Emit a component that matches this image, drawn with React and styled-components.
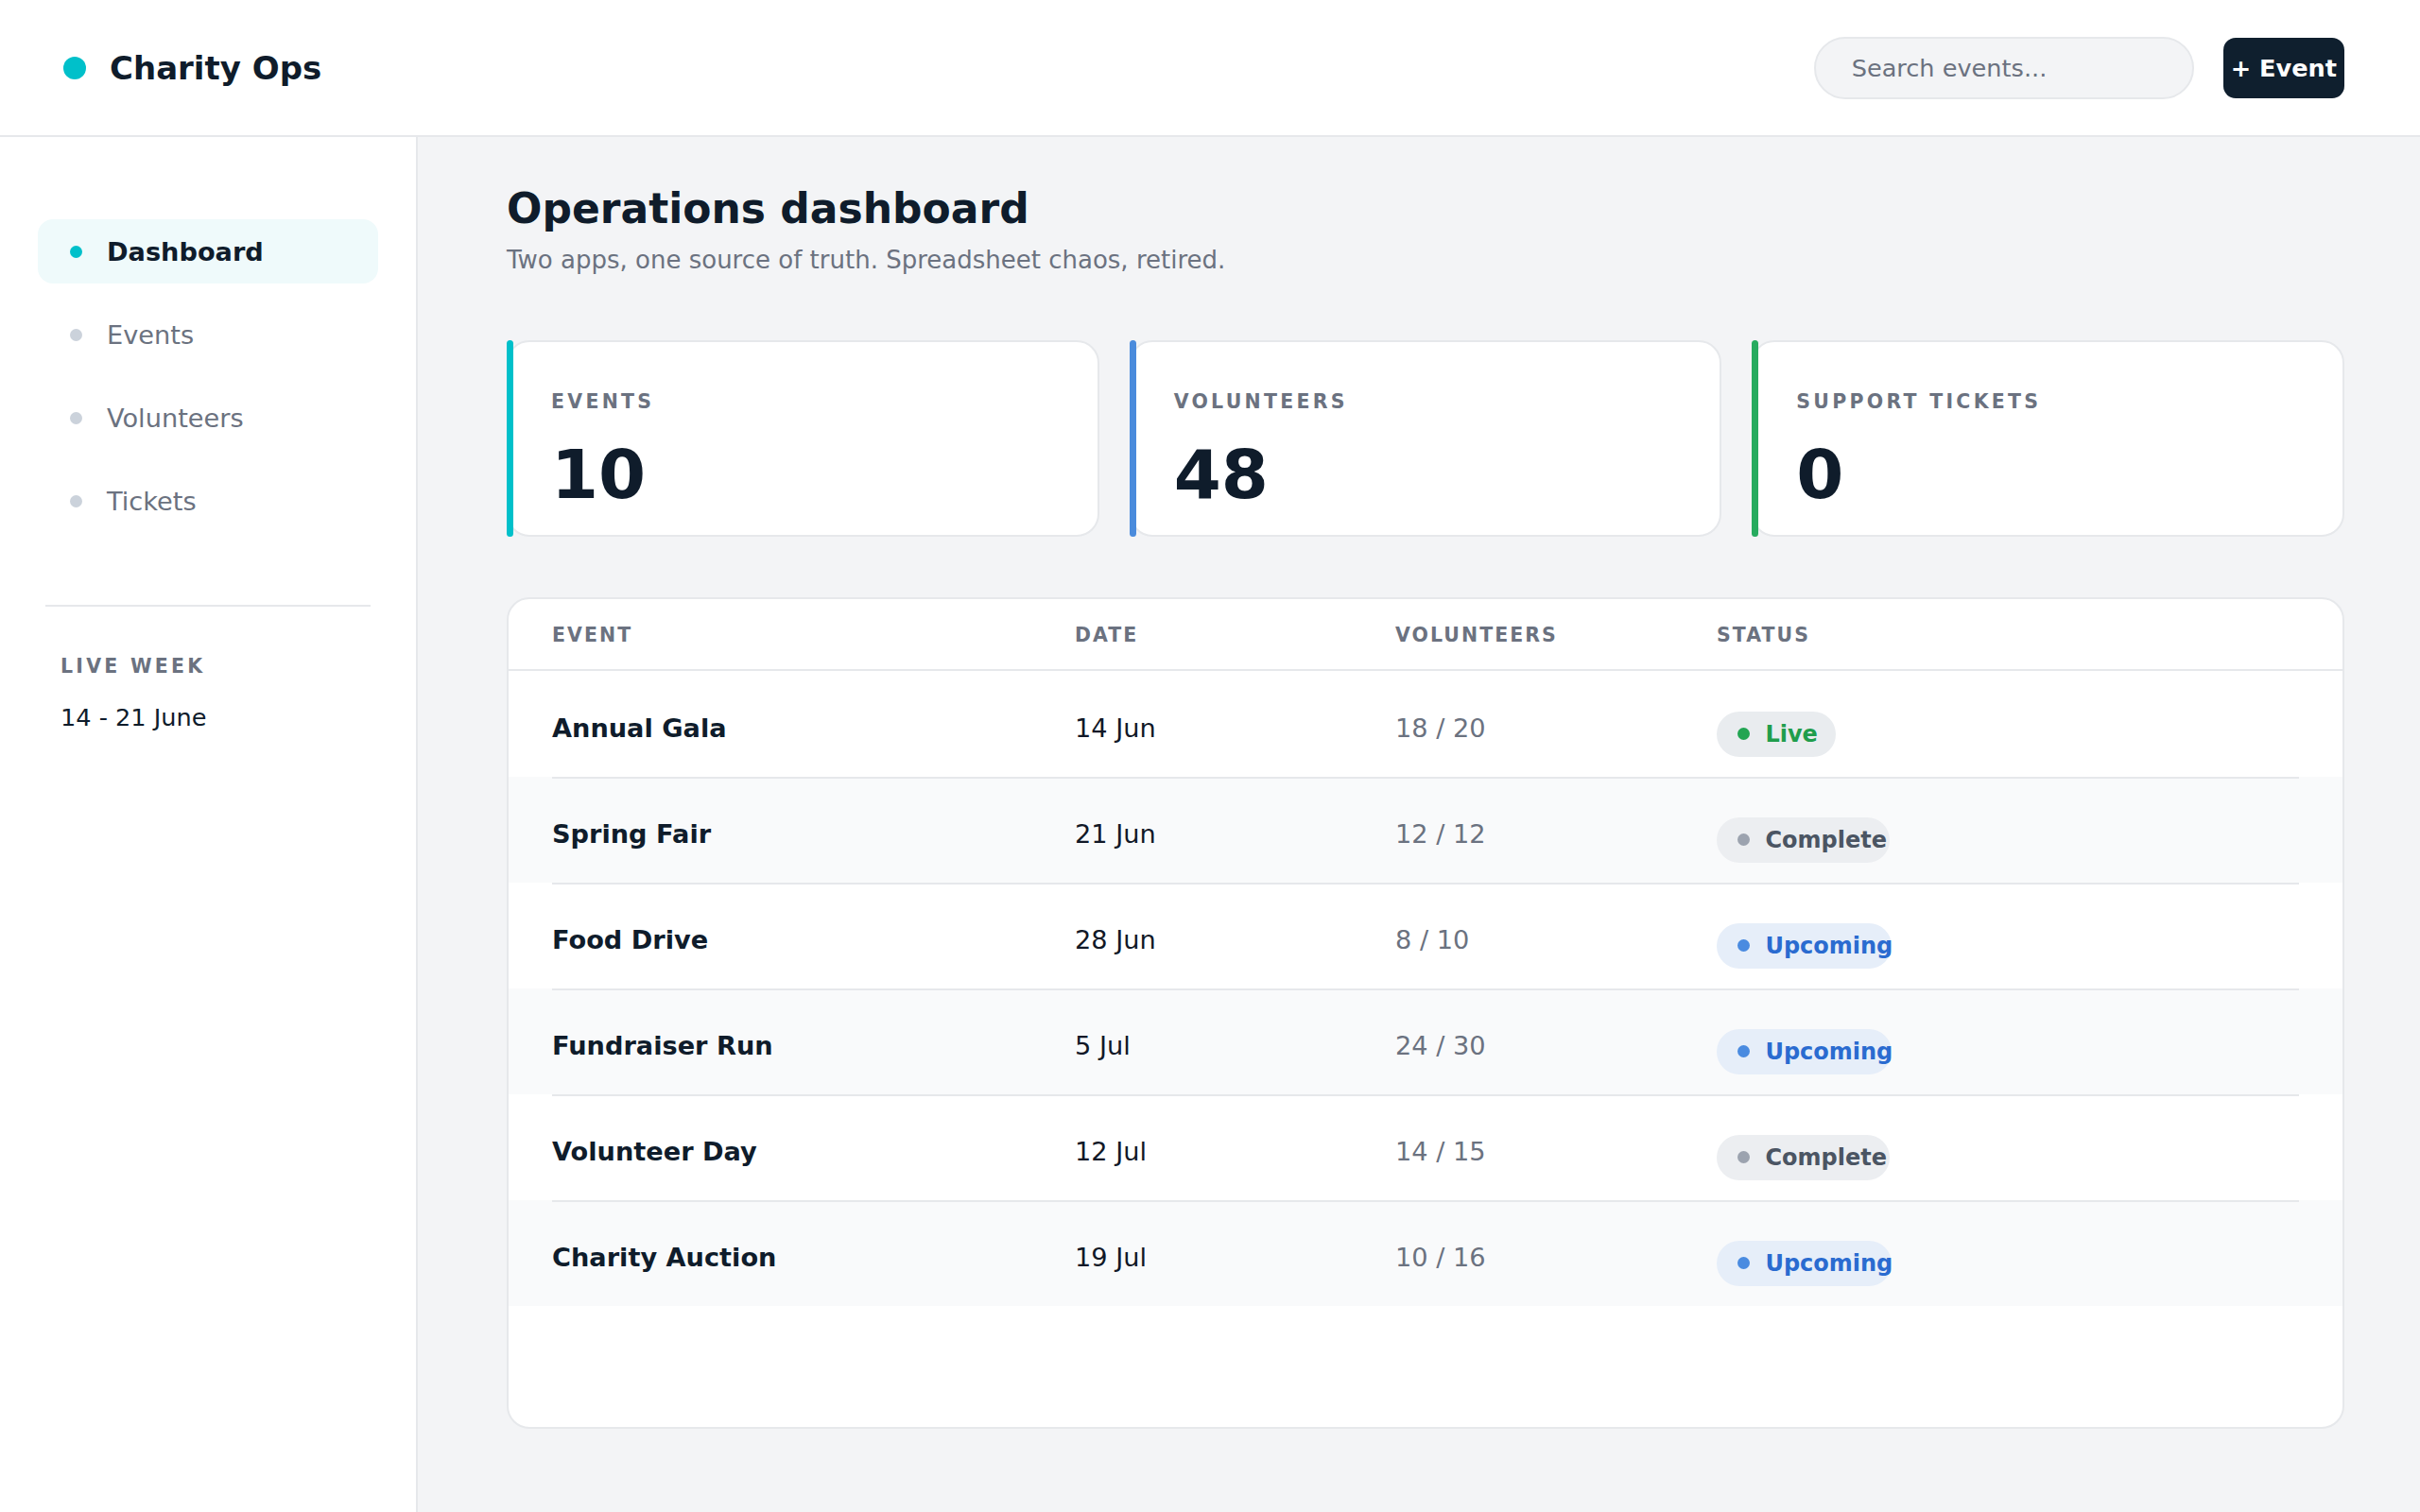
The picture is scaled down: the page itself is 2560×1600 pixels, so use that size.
import React from 'react';
import styled, { createGlobalStyle } from 'styled-components';

const GlobalStyle = createGlobalStyle`
  * { box-sizing: border-box; }
  html, body { margin: 0; padding: 0; }
  body {
    font-family: "DejaVu Sans", "Liberation Sans", sans-serif;
    background: #f3f4f6;
    color: #0f1c2b;
  }
`;

const Shell = styled.div`
  min-height: 100vh;
  display: flex;
  flex-direction: column;
`;

/* ---------- top bar ---------- */
const TopBar = styled.header`
  height: 145px;
  flex-shrink: 0;
  background: #ffffff;
  border-bottom: 2px solid #e6e8eb;
  display: flex;
  align-items: center;
  justify-content: space-between;
  padding: 0 80px 0 67px;
`;

const Brand = styled.div`
  display: flex;
  align-items: center;
  gap: 25px;
`;

const BrandDot = styled.span`
  width: 24px;
  height: 24px;
  border-radius: 50%;
  background: #00c0ca;
`;

const BrandName = styled.span`
  font-size: 34px;
  font-weight: 700;
  color: #0f1c2b;
`;

const Actions = styled.div`
  display: flex;
  align-items: center;
  gap: 31px;
`;

const Search = styled.input`
  width: 402px;
  height: 66px;
  border-radius: 33px;
  border: 2px solid #e6e8eb;
  background: #f3f4f6;
  padding: 0 0 0 38px;
  font-family: inherit;
  font-size: 25.6px;
  color: #0f1c2b;
  outline: none;
  &::placeholder { color: #6b7280; }
`;

const AddButton = styled.button`
  height: 64px;
  padding: 0 8px;
  border: none;
  border-radius: 13px;
  background: #0f1f2e;
  color: #ffffff;
  font-family: inherit;
  font-size: 25.6px;
  font-weight: 700;
  cursor: pointer;
`;

/* ---------- body ---------- */
const Body = styled.div`
  flex: 1;
  display: flex;
`;

const Sidebar = styled.aside`
  width: 442px;
  flex-shrink: 0;
  background: #ffffff;
  border-right: 2px solid #e6e8eb;
  padding: 87px 40px 0;
`;

const NavList = styled.nav`
  display: flex;
  flex-direction: column;
  gap: 20px;
`;

const NavItem = styled.a`
  height: 68px;
  border-radius: 16px;
  display: flex;
  align-items: center;
  gap: 26px;
  padding-left: 34px;
  background: ${p => (p.$active ? '#effafb' : 'transparent')};
  color: ${p => (p.$active ? '#0f1c2b' : '#6b7280')};
  font-size: 27.2px;
  font-weight: ${p => (p.$active ? 700 : 400)};
  text-decoration: none;
`;

const NavDot = styled.span`
  width: 13px;
  height: 13px;
  border-radius: 50%;
  background: ${p => (p.$active ? '#00c0ca' : '#cbd2db')};
`;

const Divider = styled.hr`
  border: none;
  height: 2px;
  background: #e6e8eb;
  margin: 76px 8px 48px;
`;

const WeekBlock = styled.div`
  padding-left: 24px;
`;

const WeekLabel = styled.div`
  font-size: 20.48px;
  font-weight: 700;
  letter-spacing: 0.16em;
  line-height: 1.5;
  color: #6b7280;
  text-transform: uppercase;
`;

const WeekRange = styled.div`
  margin-top: 19px;
  font-size: 25.6px;
  line-height: 1.5;
  color: #0f1c2b;
`;

const Main = styled.main`
  flex: 1;
  padding: 50px 80px 88px 94px;
`;

const Title = styled.h1`
  margin: 0;
  font-size: 44px;
  font-weight: 700;
  line-height: 1.2;
  color: #0f1c2b;
`;

const Subtitle = styled.p`
  margin: 8px 0 0;
  font-size: 26px;
  line-height: 1.5;
  color: #6b7280;
`;

/* ---------- stat cards ---------- */
const StatGrid = styled.section`
  margin-top: 65px;
  display: grid;
  grid-template-columns: repeat(3, 1fr);
  gap: 32px;
`;

const StatCard = styled.div`
  position: relative;
  height: 208px;
  background: #ffffff;
  border: 2px solid #e6e8eb;
  border-radius: 24px;
  padding: 48px 45px 0;
  &::before {
    content: '';
    position: absolute;
    left: -2px;
    top: -2px;
    bottom: -2px;
    width: 7px;
    border-radius: 4px;
    background: ${p => p.$accent};
  }
`;

const StatLabel = styled.div`
  font-size: 20.48px;
  font-weight: 700;
  letter-spacing: 0.16em;
  line-height: 1.5;
  color: #6b7280;
  text-transform: uppercase;
`;

const StatValue = styled.div`
  margin-top: 25px;
  font-size: 72px;
  font-weight: 700;
  line-height: 1;
  color: #0f1c2b;
`;

/* ---------- events table ---------- */
const TableCard = styled.section`
  margin-top: 64px;
  height: 880px;
  background: #ffffff;
  border: 2px solid #e6e8eb;
  border-radius: 24px;
  overflow: hidden;
`;

const columns = '553px 339px 340px 1fr';

const HeadRow = styled.div`
  display: grid;
  grid-template-columns: ${columns};
  align-items: center;
  height: 76px;
  padding: 2px 46px 0;
  border-bottom: 2px solid #e6e8eb;
`;

const HeadCell = styled.div`
  font-size: 20.48px;
  font-weight: 700;
  letter-spacing: 0.1em;
  color: #6b7280;
  text-transform: uppercase;
`;

/* rows after the first carry their divider on top, inset to the cell padding */
const Row = styled.div`
  display: grid;
  grid-template-columns: ${columns};
  align-items: center;
  height: 112px;
  padding: 10px 46px 0;
  background:
    ${p => (p.$first ? 'none' : 'linear-gradient(#e6e8eb, #e6e8eb) no-repeat center top / calc(100% - 92px) 2px')},
    ${p => (p.$striped ? '#f9fafb' : '#ffffff')};
`;

const EventName = styled.div`
  font-size: 27.2px;
  font-weight: 700;
  color: #0f1c2b;
`;

const DateCell = styled.div`
  font-size: 27.2px;
  color: #111827;
`;

const VolCell = styled.div`
  font-size: 27.2px;
  color: #6b7280;
`;

const statusStyles = {
  Live: { bg: '#e9ecef', fg: '#1f9d4c', dot: '#22a552', width: 126 },
  Complete: { bg: '#eceef1', fg: '#4b5563', dot: '#9ca3af', width: 183 },
  Upcoming: { bg: '#e6eef9', fg: '#2a6bd0', dot: '#4a8be0', width: 185 },
};

const Pill = styled.span`
  justify-self: start;
  margin-top: 12px;
  display: inline-flex;
  align-items: center;
  gap: 16px;
  height: 48px;
  width: ${p => p.$width}px;
  padding-left: 22.4px;
  border-radius: 24px;
  background: ${p => p.$bg};
  color: ${p => p.$fg};
  font-size: 24px;
  font-weight: 700;
  white-space: nowrap;
`;

const PillDot = styled.span`
  flex-shrink: 0;
  width: 13px;
  height: 13px;
  border-radius: 50%;
  background: ${p => p.$color};
`;

const navItems = ['Dashboard', 'Events', 'Volunteers', 'Tickets'];

const stats = [
  { label: 'Events', value: '10', accent: '#00c0ca' },
  { label: 'Volunteers', value: '48', accent: '#4a8bdc' },
  { label: 'Support tickets', value: '0', accent: '#27ab5f' },
];

const events = [
  { name: 'Annual Gala', date: '14 Jun', vol: '18 / 20', status: 'Live' },
  { name: 'Spring Fair', date: '21 Jun', vol: '12 / 12', status: 'Complete' },
  { name: 'Food Drive', date: '28 Jun', vol: '8 / 10', status: 'Upcoming' },
  { name: 'Fundraiser Run', date: '5 Jul', vol: '24 / 30', status: 'Upcoming' },
  { name: 'Volunteer Day', date: '12 Jul', vol: '14 / 15', status: 'Complete' },
  { name: 'Charity Auction', date: '19 Jul', vol: '10 / 16', status: 'Upcoming' },
];

function StatusPill({ status }) {
  const s = statusStyles[status];
  return (
    <Pill $bg={s.bg} $fg={s.fg} $width={s.width}>
      <PillDot $color={s.dot} />
      {status}
    </Pill>
  );
}

export default function App() {
  return (
    <Shell>
      <GlobalStyle />
      <TopBar>
        <Brand>
          <BrandDot />
          <BrandName>Charity Ops</BrandName>
        </Brand>
        <Actions>
          <Search placeholder="Search events..." />
          <AddButton>+ Event</AddButton>
        </Actions>
      </TopBar>
      <Body>
        <Sidebar>
          <NavList>
            {navItems.map((item, i) => (
              <NavItem key={item} $active={i === 0}>
                <NavDot $active={i === 0} />
                {item}
              </NavItem>
            ))}
          </NavList>
          <Divider />
          <WeekBlock>
            <WeekLabel>Live week</WeekLabel>
            <WeekRange>14 - 21 June</WeekRange>
          </WeekBlock>
        </Sidebar>
        <Main>
          <Title>Operations dashboard</Title>
          <Subtitle>Two apps, one source of truth. Spreadsheet chaos, retired.</Subtitle>
          <StatGrid>
            {stats.map(s => (
              <StatCard key={s.label} $accent={s.accent}>
                <StatLabel>{s.label}</StatLabel>
                <StatValue>{s.value}</StatValue>
              </StatCard>
            ))}
          </StatGrid>
          <TableCard>
            <HeadRow>
              <HeadCell>Event</HeadCell>
              <HeadCell>Date</HeadCell>
              <HeadCell>Volunteers</HeadCell>
              <HeadCell>Status</HeadCell>
            </HeadRow>
            {events.map((e, i) => (
              <Row key={e.name} $striped={i % 2 === 1} $first={i === 0}>
                <EventName>{e.name}</EventName>
                <DateCell>{e.date}</DateCell>
                <VolCell>{e.vol}</VolCell>
                <StatusPill status={e.status} />
              </Row>
            ))}
          </TableCard>
        </Main>
      </Body>
    </Shell>
  );
}
